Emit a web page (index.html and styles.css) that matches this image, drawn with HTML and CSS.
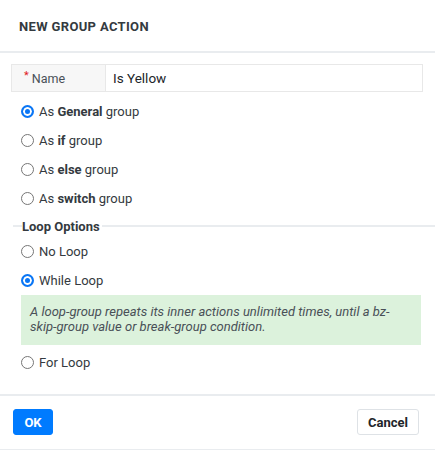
FILE: index.html
```html
<!DOCTYPE html>
<html>
<head>
<meta charset="utf-8">
<link rel="stylesheet" href="styles.css">
</head>
<body>
<div class="modal">
  <div class="modal-header">
    <h5 class="modal-title">NEW GROUP ACTION</h5>
  </div>
  <div class="modal-body">
    <div class="input-group">
      <div class="input-label"><span class="req">*</span>Name</div>
      <div class="input-value">Is Yellow</div>
    </div>
    <div class="radio-list">
      <div class="radio-row"><span class="radio checked"></span><span class="radio-text">As <b>General</b> group</span></div>
      <div class="radio-row"><span class="radio"></span><span class="radio-text">As <b>if</b> group</span></div>
      <div class="radio-row"><span class="radio"></span><span class="radio-text">As <b>else</b> group</span></div>
      <div class="radio-row"><span class="radio"></span><span class="radio-text">As <b>switch</b> group</span></div>
    </div>
    <div class="fieldset">
      <div class="legend"><span class="legend-text">Loop Options</span></div>
      <div class="loop-list">
        <div class="radio-row"><span class="radio"></span><span class="radio-text">No Loop</span></div>
        <div class="radio-row"><span class="radio checked"></span><span class="radio-text">While Loop</span></div>
        <div class="info">A loop-group repeats its inner actions unlimited times, until a bz-skip-group value or break-group condition.</div>
        <div class="radio-row"><span class="radio"></span><span class="radio-text">For Loop</span></div>
      </div>
    </div>
  </div>
  <div class="modal-footer">
    <button class="btn btn-primary">OK</button>
    <button class="btn btn-light">Cancel</button>
  </div>
</div>
</body>
</html>
```
FILE: styles.css
```css
html, body {
  margin: 0;
  padding: 0;
  background: #fff;
}
body {
  font-family: Roboto, "Liberation Sans", sans-serif;
  color: #343a40;
  font-size: 13px;
}
.modal {
  width: 435px;
  height: 450px;
  box-sizing: border-box;
  border-bottom: 1px solid #e9ecef;
}
.modal-header {
  padding: 19px 19px 16px;
  border-bottom: 2px solid #e9ecef;
}
.modal-title {
  margin: 0;
  font-size: 13px;
  line-height: 16px;
  font-weight: 700;
  letter-spacing: 0.35px;
  color: #343a40;
}
.modal-body {
  padding: 11px 12px 0 11px;
  height: 341px;
  box-sizing: border-box;
}
.input-group {
  display: flex;
  height: 28px;
  border: 1px solid #e8e8e8;
  box-sizing: border-box;
}
.input-label {
  width: 94px;
  background: #f7f7f7;
  border-right: 1px solid #e8e8e8;
  display: flex;
  align-items: center;
  padding-left: 12px;
  box-sizing: border-box;
  font-size: 12.5px;
  color: #495057;
}
.req {
  color: #e01b1b;
  font-size: 11px;
  align-self: flex-start;
  margin-top: 4px;
  margin-right: 3px;
}
.input-value {
  flex: 1;
  display: flex;
  align-items: center;
  padding-left: 7px;
  font-size: 13.5px;
  color: #212529;
}
.radio-list {
  margin-top: 5px;
  padding-left: 10px;
}
.radio-row {
  display: flex;
  align-items: center;
  height: 29px;
  gap: 5px;
}
.radio {
  width: 13px;
  height: 13px;
  box-sizing: border-box;
  border-radius: 50%;
  border: 1px solid #767676;
  background: #fff;
  flex: none;
}
.radio.checked {
  border: 2px solid #0a76f5;
  background: #0a76f5;
  box-shadow: inset 0 0 0 2px #fff;
}
.radio-text {
  font-size: 13px;
  color: #343a40;
}
.radio-text b {
  font-weight: 700;
}
.fieldset {
  margin-top: 6px;
  margin-left: 2px;
  margin-right: -12px;
}
.legend {
  display: flex;
  align-items: center;
  height: 14px;
  background: linear-gradient(#e9ecef, #e9ecef) no-repeat 0 6px / 100% 2px;
  padding-left: 9px;
}
.legend-text {
  background: #fff;
  font-weight: 700;
  font-size: 13px;
  padding-right: 2px;
}
.loop-list {
  margin-top: 4px;
  padding-left: 8px;
  padding-right: 14px;
}
.info {
  margin: 0 0 3px;
  background: #dcf2dc;
  padding: 9px 9px 11px;
  font-style: italic;
  font-size: 13px;
  line-height: 15px;
  color: #495057;
}
.modal-footer {
  border-top: 2px solid #e9ecef;
  display: flex;
  justify-content: space-between;
  align-items: center;
  padding: 13px 16px 0 13px;
}
.btn {
  height: 26px;
  font-family: Roboto, "Liberation Sans", sans-serif;
  font-weight: 700;
  font-size: 13px;
  border-radius: 3px;
  padding: 0;
  cursor: pointer;
}
.btn-primary {
  width: 40px;
  background: #007bff;
  color: #fff;
  border: 1px solid #007bff;
}
.btn-light {
  width: 62px;
  background: #fff;
  color: #212529;
  border: 1px solid #dee2e6;
}
```
